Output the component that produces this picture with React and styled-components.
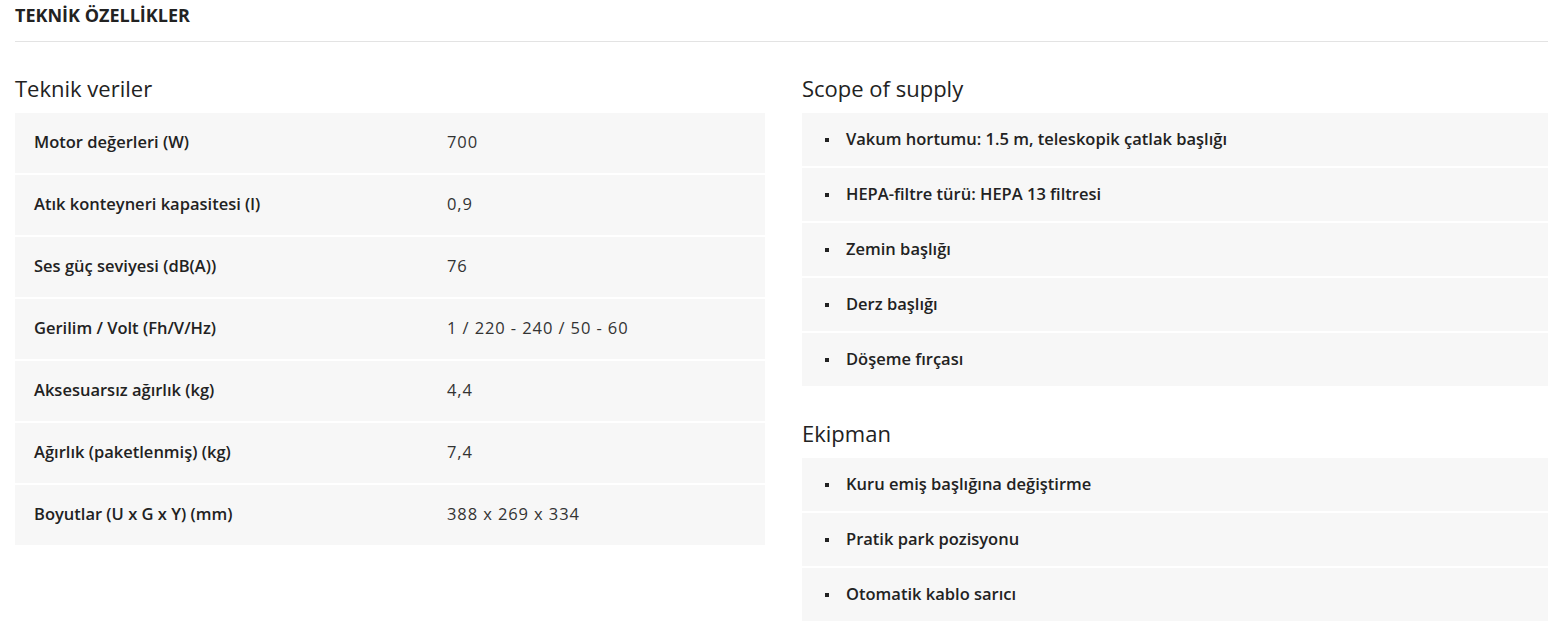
import React from 'react';
import styled, { createGlobalStyle } from 'styled-components';

const specs = [
  ['Motor değerleri (W)', '700'],
  ['Atık konteyneri kapasitesi (l)', '0,9'],
  ['Ses güç seviyesi (dB(A))', '76'],
  ['Gerilim / Volt (Fh/V/Hz)', '1 / 220 - 240 / 50 - 60'],
  ['Aksesuarsız ağırlık (kg)', '4,4'],
  ['Ağırlık (paketlenmiş) (kg)', '7,4'],
  ['Boyutlar (U x G x Y) (mm)', '388 x 269 x 334'],
];

const supply = [
  'Vakum hortumu: 1.5 m, teleskopik çatlak başlığı',
  'HEPA-filtre türü: HEPA 13 filtresi',
  'Zemin başlığı',
  'Derz başlığı',
  'Döşeme fırçası',
];

const equipment = [
  'Kuru emiş başlığına değiştirme',
  'Pratik park pozisyonu',
  'Otomatik kablo sarıcı',
];

const App = () => {
  return (
    <>
      <GlobalStyle />
      <Page>
        <Title>TEKNİK ÖZELLİKLER</Title>
        <Columns>
          <section>
            <SectionHeading>Teknik veriler</SectionHeading>
            <SpecTable>
              {specs.map(([label, value]) => (
                <SpecRow key={label}>
                  <SpecLabel>{label}</SpecLabel>
                  <SpecValue>{value}</SpecValue>
                </SpecRow>
              ))}
            </SpecTable>
          </section>
          <section>
            <SectionHeading>Scope of supply</SectionHeading>
            <ItemList>
              {supply.map((item) => (
                <Item key={item}>{item}</Item>
              ))}
            </ItemList>
            <SectionHeading spaced>Ekipman</SectionHeading>
            <ItemList>
              {equipment.map((item) => (
                <Item key={item}>{item}</Item>
              ))}
            </ItemList>
          </section>
        </Columns>
      </Page>
    </>
  );
};

const GlobalStyle = createGlobalStyle`
  body {
    margin: 0;
    background: #fff;
    font-family: "Open Sans", "Liberation Sans", sans-serif;
    color: #1c1c1c;
  }
`;

const Page = styled.div`
  padding-left: 15px;
`;

const Title = styled.h2`
  margin: 0;
  padding: 2px 0 12px;
  font-size: 18px;
  line-height: 27px;
  font-weight: 700;
  color: #222;
  border-bottom: 1px solid #e3e3e3;
`;

const Columns = styled.div`
  display: grid;
  grid-template-columns: 750px 1fr;
  column-gap: 37px;
  margin-top: 32px;
`;

const SectionHeading = styled.h3`
  margin: ${(p) => (p.spaced ? '33px' : '0')} 0 11px;
  font-size: 22px;
  line-height: 28px;
  font-weight: 400;
  color: #222;
`;

const SpecTable = styled.div`
  display: flex;
  flex-direction: column;
  gap: 2px;
`;

const SpecRow = styled.div`
  display: grid;
  grid-template-columns: 432px 1fr;
  align-items: center;
  height: 60px;
  padding-bottom: 3px;
  box-sizing: border-box;
  background: #f7f7f7;
`;

const SpecLabel = styled.div`
  padding-left: 19px;
  font-size: 16.5px;
  font-weight: 600;
  color: #222;
`;

const SpecValue = styled.div`
  font-size: 16.5px;
  font-weight: 400;
  letter-spacing: 0.9px;
  color: #333;
`;

const ItemList = styled.ul`
  margin: 0;
  padding: 0;
  list-style: none;
  display: flex;
  flex-direction: column;
  gap: 2px;
`;

const Item = styled.li`
  display: flex;
  align-items: center;
  gap: 17px;
  height: 53px;
  padding-left: 23px;
  padding-bottom: 2px;
  box-sizing: border-box;
  background: #f7f7f7;
  font-size: 16.5px;
  font-weight: 600;
  color: #222;

  &::before {
    content: "";
    width: 4px;
    height: 4px;
    background: #222;
    flex-shrink: 0;
    margin-top: 3px;
  }
`;

export default App;
